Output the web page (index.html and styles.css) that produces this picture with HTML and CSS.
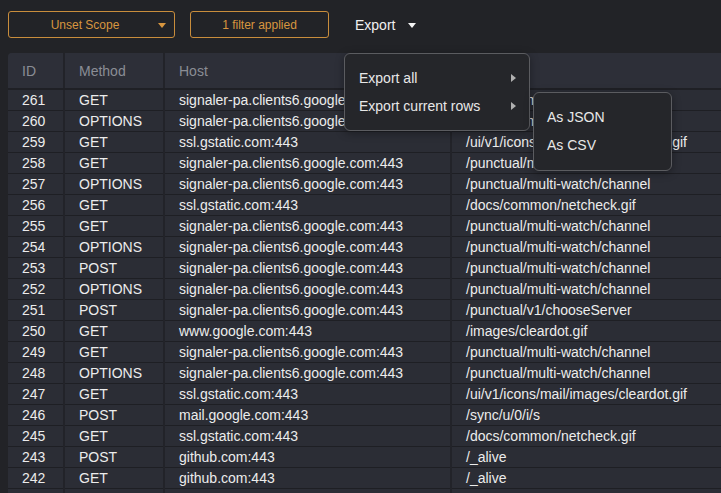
FILE: index.html
```html
<!DOCTYPE html>
<html>
<head>
<meta charset="utf-8">
<link rel="stylesheet" href="styles.css">
</head>
<body>
<div class="page">
  <div class="toolbar">
    <button class="obtn scope"><span class="lbl">Unset Scope</span><span class="caret orange"></span></button>
    <button class="obtn filter">1 filter applied</button>
    <div class="export">Export <span class="caret white"></span></div>
  </div>
  <div class="tablewrap">
    <table class="grid">
      <colgroup><col class="c-id"><col class="c-method"><col class="c-host"><col class="c-path"></colgroup>
      <thead>
        <tr><th>ID</th><th>Method</th><th>Host</th><th>Path</th></tr>
      </thead>
      <tbody>
        <tr><td>261</td><td>GET</td><td>signaler-pa.clients6.google.com:443</td><td>/punctual/multi-watch/channel</td></tr>
        <tr><td>260</td><td>OPTIONS</td><td>signaler-pa.clients6.google.com:443</td><td>/punctual/multi-watch/channel</td></tr>
        <tr><td>259</td><td>GET</td><td>ssl.gstatic.com:443</td><td>/ui/v1/icons/mail/images/cleardot.gif</td></tr>
        <tr><td>258</td><td>GET</td><td>signaler-pa.clients6.google.com:443</td><td>/punctual/multi-watch/channel</td></tr>
        <tr><td>257</td><td>OPTIONS</td><td>signaler-pa.clients6.google.com:443</td><td>/punctual/multi-watch/channel</td></tr>
        <tr><td>256</td><td>GET</td><td>ssl.gstatic.com:443</td><td>/docs/common/netcheck.gif</td></tr>
        <tr><td>255</td><td>GET</td><td>signaler-pa.clients6.google.com:443</td><td>/punctual/multi-watch/channel</td></tr>
        <tr><td>254</td><td>OPTIONS</td><td>signaler-pa.clients6.google.com:443</td><td>/punctual/multi-watch/channel</td></tr>
        <tr><td>253</td><td>POST</td><td>signaler-pa.clients6.google.com:443</td><td>/punctual/multi-watch/channel</td></tr>
        <tr><td>252</td><td>OPTIONS</td><td>signaler-pa.clients6.google.com:443</td><td>/punctual/multi-watch/channel</td></tr>
        <tr><td>251</td><td>POST</td><td>signaler-pa.clients6.google.com:443</td><td>/punctual/v1/chooseServer</td></tr>
        <tr><td>250</td><td>GET</td><td>www.google.com:443</td><td>/images/cleardot.gif</td></tr>
        <tr><td>249</td><td>GET</td><td>signaler-pa.clients6.google.com:443</td><td>/punctual/multi-watch/channel</td></tr>
        <tr><td>248</td><td>OPTIONS</td><td>signaler-pa.clients6.google.com:443</td><td>/punctual/multi-watch/channel</td></tr>
        <tr><td>247</td><td>GET</td><td>ssl.gstatic.com:443</td><td>/ui/v1/icons/mail/images/cleardot.gif</td></tr>
        <tr><td>246</td><td>POST</td><td>mail.google.com:443</td><td>/sync/u/0/i/s</td></tr>
        <tr><td>245</td><td>GET</td><td>ssl.gstatic.com:443</td><td>/docs/common/netcheck.gif</td></tr>
        <tr><td>243</td><td>POST</td><td>github.com:443</td><td>/_alive</td></tr>
        <tr><td>242</td><td>GET</td><td>github.com:443</td><td>/_alive</td></tr>
        <tr><td></td><td></td><td></td><td></td></tr>
      </tbody>
    </table>
  </div>
</div>
<div class="menu main-menu">
  <div class="item">Export all<span class="arrow"></span></div>
  <div class="item">Export current rows<span class="arrow"></span></div>
</div>
<div class="menu sub-menu">
  <div class="item">As JSON</div>
  <div class="item">As CSV</div>
</div>
</body>
</html>
```
FILE: styles.css
```css
html, body {
  margin: 0;
  padding: 0;
  background: #222327;
  font-family: "Liberation Sans", Arial, sans-serif;
  color: #e6e6e6;
  overflow: hidden;
  height: 493px;
}
.page {
  padding: 11px 0 0 8px;
}
.toolbar {
  display: flex;
  align-items: center;
  height: 27px;
}
.obtn {
  box-sizing: border-box;
  height: 27px;
  background: transparent;
  border: 1px solid #c98d3c;
  border-radius: 3px;
  color: #d8963f;
  font-family: "Liberation Sans", Arial, sans-serif;
  font-size: 12px;
  display: flex;
  align-items: center;
  justify-content: center;
  padding: 0;
}
.scope {
  width: 167px;
  position: relative;
}
.scope .lbl {
  margin-left: -13px;
}
.scope .caret {
  position: absolute;
  right: 8px;
  top: 11px;
}
.filter {
  width: 139px;
  margin-left: 15px;
}
.export {
  margin-left: 26px;
  font-size: 14px;
  color: #f0f0f0;
  display: flex;
  align-items: center;
}
.export .caret {
  margin-left: 13px;
  margin-top: 1px;
}
.caret {
  display: inline-block;
  width: 0;
  height: 0;
  border-left: 4px solid transparent;
  border-right: 4px solid transparent;
  border-top: 5px solid #fff;
}
.caret.orange { border-top-color: #d8963f; }
.caret.white { border-top-color: #f4f4f4; }

.tablewrap {
  margin-top: 15px;
  background: #2b2d35;
  border-top-left-radius: 4px;
  overflow: hidden;
  height: 440px;
}
.grid {
  border-collapse: collapse;
  table-layout: fixed;
  width: 740px;
  font-size: 14px;
}
.c-id { width: 56px; }
.c-method { width: 100px; }
.c-host { width: 287px; }
.c-path { width: 297px; }
.grid th {
  height: 35px;
  text-align: left;
  font-weight: normal;
  color: #8a8d95;
  background: #2d2f38;
  padding: 0 14px;
  border-right: 2px solid #222329;
  border-bottom: 2px solid #1f2025;
}
.grid td {
  height: 20px;
  padding: 0 14px;
  white-space: nowrap;
  overflow: hidden;
  color: #ececec;
  border-right: 2px solid #222329;
  border-bottom: 1px solid #1e1f24;
  line-height: 20px;
}
.grid th:last-child, .grid td:last-child { border-right: none; }

.menu {
  position: absolute;
  box-sizing: border-box;
  background: #25262a;
  border: 1px solid #5b5c60;
  border-radius: 6px;
  font-size: 14px;
  color: #e8e8e8;
  box-shadow: 0 2px 8px rgba(0,0,0,0.35);
}
.main-menu {
  left: 344px;
  top: 53px;
  width: 186px;
  height: 78px;
  padding: 10px 0 0 0;
}
.sub-menu {
  left: 533px;
  top: 92px;
  width: 139px;
  height: 79px;
  padding: 10px 0 0 0;
}
.menu .item {
  height: 28px;
  line-height: 28px;
  padding-left: 14px;
  position: relative;
}
.sub-menu .item {
  padding-left: 13px;
}
.arrow {
  position: absolute;
  left: 166px;
  top: 10px;
  width: 0;
  height: 0;
  border-top: 4px solid transparent;
  border-bottom: 4px solid transparent;
  border-left: 5px solid #b0b0b0;
}
```
